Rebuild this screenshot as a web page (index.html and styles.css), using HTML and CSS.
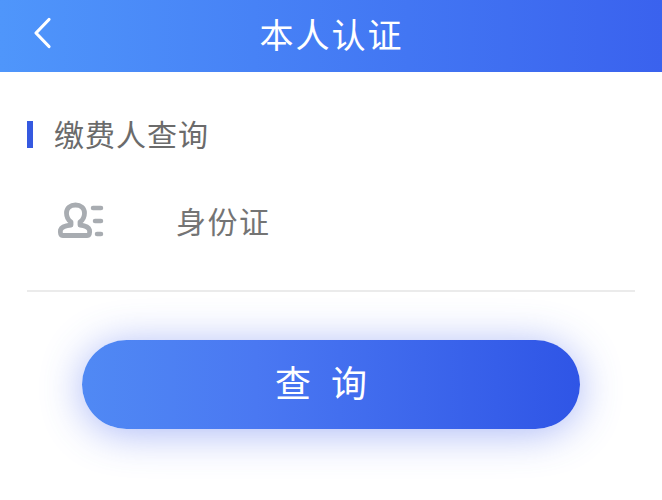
FILE: index.html
```html
<!DOCTYPE html>
<html lang="zh-CN">
<head>
<meta charset="utf-8">
<title>本人认证</title>
<link rel="stylesheet" href="styles.css">
</head>
<body>
<header class="topbar">
  <svg class="back" width="20" height="32" viewBox="0 0 20 32"><path d="M17 2.500 4 16 17 29.500" fill="none" stroke="#fff" stroke-width="3.200" stroke-linecap="round" stroke-linejoin="round"/></svg>
  <h1 class="title">本人认证</h1>
</header>
<main class="content">
  <h2 class="section"><span class="marker"></span>缴费人查询</h2>
  <div class="row">
    <svg class="idicon" width="48" height="40" viewBox="0 0 48 40">
      <g fill="none" stroke="#a8acb1" stroke-width="4.800" stroke-linecap="round" stroke-linejoin="round">
        <path d="M15 22C12 20 10.500 16.500 10.500 13 10.500 8 14.500 5 19.500 5S28.500 8 28.500 13C28.500 16.500 27 20 24 22V25C28 25.500 32.500 26.500 33.500 30 34 33 33.500 35.500 31 35.500H7C4.500 35.500 4 33 4.500 30 5.500 26.500 11 25.500 15 25Z"/>
        <path d="M37 8h8M39 21h6M41 34h4" stroke-width="4.500"/>
      </g>
    </svg>
    <span class="idlabel">身份证</span>
  </div>
  <div class="action"><button class="submit" type="button">查 询</button></div>
</main>
</body>
</html>
```

FILE: styles.css
```css
* { box-sizing: border-box; }
html, body { margin: 0; height: 100%; }
body {
  background: #fff;
  overflow: hidden;
  font-family: "Noto Sans CJK SC", "Noto Sans", sans-serif;
}
.topbar {
  height: 72px;
  display: flex;
  align-items: center;
  justify-content: center;
  position: relative;
  background: linear-gradient(90deg, #4f96fb 0%, #3a62ee 100%);
}
.back { position: absolute; left: 32px; top: 17px; }
.title {
  margin: -4px 0 0;
  font-size: 34px;
  font-weight: 400;
  color: #fff;
  letter-spacing: 2px;
  line-height: 72px;
  padding-left: 1px;
}
.content { padding: 0 27px; }
.section {
  margin: 0;
  padding-top: 42px;
  display: flex;
  align-items: center;
  gap: 21px;
  font-size: 30px;
  line-height: 38px;
  font-weight: 400;
  color: #6b6b6b;
  letter-spacing: 1px;
}
.marker { width: 6px; height: 27px; margin-top: 3px; background: #3559e0; }
.row {
  height: 140px;
  display: flex;
  align-items: center;
  padding: 0 0 2px 29px;
  border-bottom: 2px solid #ebebeb;
}
.idicon { flex: none; }
.idlabel {
  margin-left: 72px;
  font-size: 30px;
  color: #747474;
  letter-spacing: 1.500px;
}
.action { padding: 48px 0 0 55px; }
.submit {
  display: block;
  width: 498px;
  height: 89px;
  padding: 0 14px 7px 0;
  border: 0;
  border-radius: 45px;
  background: linear-gradient(90deg, #5089f4 0%, #4a78f2 35%, #2f55e6 100%);
  box-shadow: 0 4px 42px rgba(64, 96, 238, .45);
  color: #fff;
  font-family: inherit;
  font-size: 36px;
  letter-spacing: 6px;
}
```
